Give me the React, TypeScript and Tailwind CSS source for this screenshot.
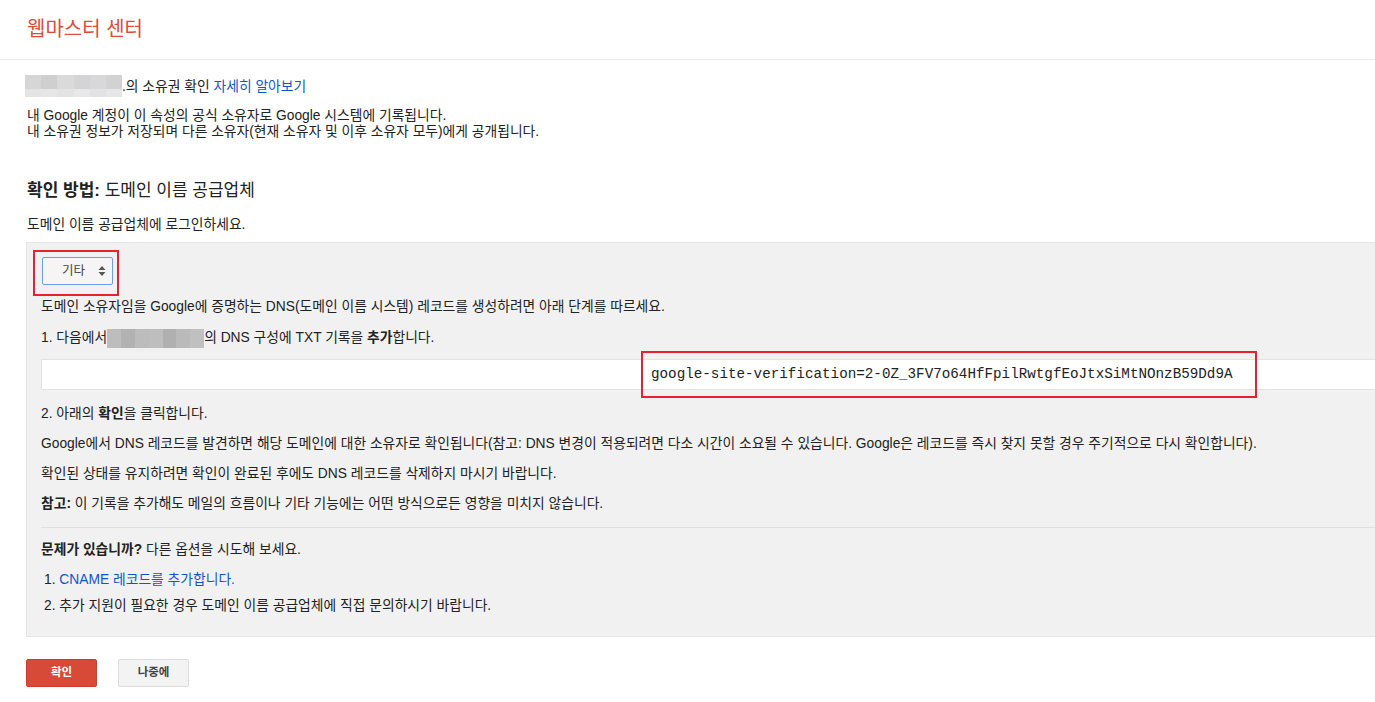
const FONT = { fontFamily: '"Liberation Sans", "Noto Sans CJK KR", sans-serif' };

function Mosaic({ top, bottom, className }: { top: string[]; bottom?: string[]; className?: string }) {
  return (
    <span className={`inline-flex flex-col align-middle ${className ?? ''}`}>
      <span className="flex flex-1">
        {top.map((c, i) => (
          <span key={i} className="flex-1" style={{ backgroundColor: c }} />
        ))}
      </span>
      {bottom && (
        <span className="flex h-[8px]">
          {bottom.map((c, i) => (
            <span key={i} className="flex-1" style={{ backgroundColor: c }} />
          ))}
        </span>
      )}
    </span>
  );
}

export default function App() {
  return (
    <div className="min-h-screen w-full overflow-hidden bg-white text-[13.8px] text-[#222]" style={FONT}>
      <header className="h-[60px] border-b border-[#ebebeb] pl-[27px] pt-[16px]">
        <h1 className="text-[20px] leading-[26px] text-[#dd4b39]">웹마스터 센터</h1>
      </header>

      <div className="pl-[27px] pt-[15px]">
        <div className="flex h-[22px] items-center -ml-[2px]">
          <Mosaic
            className="h-[22px] w-[97px]"
            top={['#d6d6d6', '#cfcfcf', '#dadada', '#d4d4d4', '#d7d8da', '#d2d2d2']}
            bottom={['#e4e4e4', '#e6e6e6', '#e3e3e3', '#e8e8e8', '#e2e2e2', '#e6e6e6']}
          />
          <span className="mt-[2px]">
            .의 소유권 확인 <a href="#" className="text-[#15c]">자세히 알아보기</a>
          </span>
        </div>

        <p className="mt-[11px] leading-[16px]">내 Google 계정이 이 속성의 공식 소유자로 Google 시스템에 기록됩니다.</p>
        <p className="leading-[16px]">내 소유권 정보가 저장되며 다른 소유자(현재 소유자 및 이후 소유자 모두)에게 공개됩니다.</p>

        <h2 className="mt-[41px] text-[17px] leading-[20px]">
          <b>확인 방법:</b> 도메인 이름 공급업체
        </h2>

        <p className="mt-[16px] leading-[16px]">도메인 이름 공급업체에 로그인하세요.</p>
      </div>

      <div className="ml-[26px] mt-[9px] w-[1400px] border border-[#e5e5e5] bg-[#f1f1f1] pb-[22px] pl-[14px] pt-[14px]">
        <div className="relative ml-[1px] w-[71px]">
          <div className="flex h-[28px] w-[71px] items-center rounded-[2px] border border-[#6d9eeb] bg-[#f5f5f5] pl-[19px] pr-[6px] text-[12.5px] text-[#444]">
            <span className="flex-1">기타</span>
            <svg width="8" height="12" viewBox="0 0 8 12" className="text-[#555]">
              <path d="M4 1 L7.5 5 H0.5 Z" fill="currentColor" />
              <path d="M4 11 L7.5 7 H0.5 Z" fill="currentColor" />
            </svg>
          </div>
          <div className="absolute -left-[9px] -top-[7px] h-[46px] w-[86px] border-2 border-[#e8222c]" />
        </div>

        <p className="mt-[14px] leading-[16px]">
          도메인 소유자임을 Google에 증명하는 DNS(도메인 이름 시스템) 레코드를 생성하려면 아래 단계를 따르세요.
        </p>

        <p className="mt-[15px] flex h-[16px] items-center leading-[16px]">
          <span>1. 다음에서</span>
          <Mosaic
            className="h-[19px] w-[97px]"
            top={['#bdbdbd', '#b2b2b2', '#bcbcbc', '#bebebe', '#b0b0b0', '#bababa', '#c0c0c0']}
          />
          <span>
            의 DNS 구성에 TXT 기록을 <b>추가</b>합니다.
          </span>
        </p>

        <div className="relative mt-[13px] flex h-[31px] items-center border border-[#e3e3e3] bg-white pl-[609px]">
          <span className="text-[14.25px] text-[#222]" style={{ fontFamily: '"Liberation Mono", monospace' }}>
            google-site-verification=2-0Z_3FV7o64HfFpilRwtgfEoJtxSiMtNOnzB59Dd9A
          </span>
          <div className="absolute left-[599px] -top-[9px] h-[47px] w-[616px] border-2 border-[#e8222c]" />
        </div>

        <p className="mt-[16px] leading-[16px]">
          2. 아래의 <b>확인</b>을 클릭합니다.
        </p>
        <p className="mt-[14px] leading-[16px]">
          Google에서 DNS 레코드를 발견하면 해당 도메인에 대한 소유자로 확인됩니다(참고: DNS 변경이 적용되려면 다소 시간이 소요될 수
          있습니다. Google은 레코드를 즉시 찾지 못할 경우 주기적으로 다시 확인합니다).
        </p>
        <p className="mt-[14px] leading-[16px]">확인된 상태를 유지하려면 확인이 완료된 후에도 DNS 레코드를 삭제하지 마시기 바랍니다.</p>
        <p className="mt-[14px] leading-[16px]">
          <b>참고:</b> 이 기록을 추가해도 메일의 흐름이나 기타 기능에는 어떤 방식으로든 영향을 미치지 않습니다.
        </p>

        <div className="mt-[15px] h-px bg-[#e0e0e0]" />

        <p className="mt-[14px] leading-[16px]">
          <b>문제가 있습니까?</b> 다른 옵션을 시도해 보세요.
        </p>
        <ol className="pl-[3px]">
          <li className="mt-[14px] leading-[16px]">
            1. <a href="#" className="text-[#15c]">CNAME 레코드를 추가합니다.</a>
          </li>
          <li className="mt-[10px] leading-[16px]">2. 추가 지원이 필요한 경우 도메인 이름 공급업체에 직접 문의하시기 바랍니다.</li>
        </ol>
      </div>

      <div className="ml-[26px] mt-[22px] flex gap-[21px]">
        <button className="h-[28px] w-[71px] rounded-[2px] border border-[#c6402f] bg-[#d84a38] text-[11.5px] font-bold text-white">
          확인
        </button>
        <button className="h-[28px] w-[71px] rounded-[2px] border border-[#dcdcdc] bg-[#f3f3f3] text-[11.5px] font-bold text-[#444]">
          나중에
        </button>
      </div>
    </div>
  );
}
